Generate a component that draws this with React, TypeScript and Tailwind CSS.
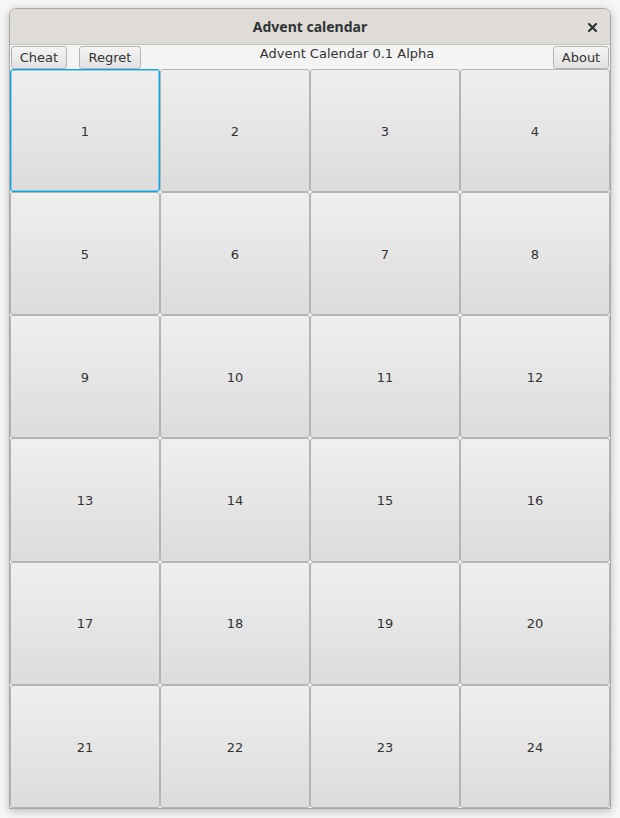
const days = Array.from({ length: 24 }, (_, i) => i + 1);

const font = { fontFamily: '"DejaVu Sans", "Noto Sans", sans-serif' };

const ToolButton = ({ label, className }: { label: string; className?: string }) => (
  <button
    className={
      "h-[23px] rounded-[3px] border border-[#b5b5b5] bg-gradient-to-b from-[#f4f4f4] to-[#e2e2e2] px-[7px] text-[13px] leading-none text-[#333] " +
      (className ?? "")
    }
  >
    {label}
  </button>
);

export default function App() {
  return (
    <div className="h-[818px] w-[620px] bg-[#f6f6f6] pl-[9px] pt-[8px]" style={font}>
      <div className="flex h-[801px] w-[602px] flex-col overflow-hidden rounded-t-[7px] border border-[#a9a9a9] bg-[#f4f4f4] shadow-[0_2px_8px_rgba(0,0,0,0.25)]">
        <div className="relative flex h-[36px] shrink-0 items-center justify-center border-b border-[#c6c3be] bg-[#dfdcd8]">
          <span
            className="text-[14px] font-bold text-[#2e3436]"
            style={{ fontFamily: '"Noto Sans", "DejaVu Sans", sans-serif' }}
          >
            Advent calendar
          </span>
          <svg className="absolute right-[13px] top-[14px]" width="9" height="9" viewBox="0 0 9 9">
            <path d="M1 1L8 8M8 1L1 8" stroke="#2e3436" strokeWidth="2.2" strokeLinecap="square" />
          </svg>
        </div>
        <div className="flex h-[24px] shrink-0 items-start pt-[1px]">
          <ToolButton label="Cheat" className="ml-[1px] w-[56px]" />
          <ToolButton label="Regret" className="ml-[12px] w-[62px]" />
          <div className="flex-1 pt-[1px] text-center text-[13px] leading-[14px] text-[#333]">
            Advent Calendar 0.1 Alpha
          </div>
          <ToolButton label="About" className="mr-[1px] w-[56px]" />
        </div>
        <div className="grid flex-1 grid-cols-4 grid-rows-6">
          {days.map((d) => (
            <button
              key={d}
              className={
                "flex items-center justify-center rounded-[3px] border bg-gradient-to-b from-[#efefef] to-[#dcdcdc] pt-[2px] text-[13px] text-[#333] " +
                (d === 1
                  ? "border-[#0ea5e6] shadow-[inset_0_0_0_1px_rgba(14,165,230,0.45)]"
                  : "border-[#b4b4b4]")
              }
            >
              {d}
            </button>
          ))}
        </div>
      </div>
    </div>
  );
}
